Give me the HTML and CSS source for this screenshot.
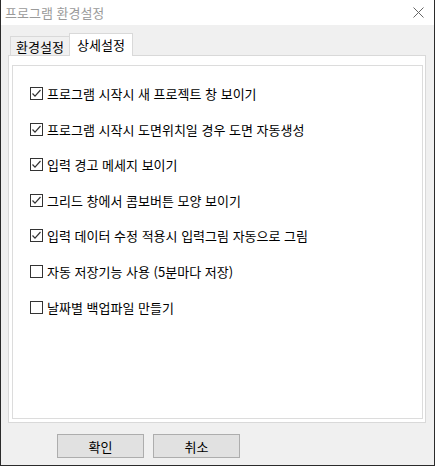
FILE: index.html
```html
<!DOCTYPE html>
<html lang="ko">
<head>
<meta charset="utf-8">
<title>프로그램 환경설정</title>
<link rel="stylesheet" href="styles.css">
</head>
<body>
<div class="window">
  <div class="titlebar">
    <span class="title">프로그램 환경설정</span>
    <svg class="close" width="11" height="11" viewBox="0 0 11 11"><path d="M0.5 0.5 L10.5 10.5 M10.5 0.5 L0.5 10.5" stroke="#666" stroke-width="1" fill="none"/></svg>
  </div>
  <div class="body">
    <div class="tabs">
      <div class="tab">환경설정</div>
      <div class="tab active">상세설정</div>
    </div>
    <div class="panel">
      <div class="group">
        <div class="row"><span class="cb checked"><svg width="11" height="11" viewBox="0 0 11 11"><path d="M1.5 5.5 L4 8.2 L9.5 2" stroke="#333" stroke-width="1.2" fill="none"/></svg></span><span class="label">프로그램 시작시 새 프로젝트 창 보이기</span></div>
        <div class="row"><span class="cb checked"><svg width="11" height="11" viewBox="0 0 11 11"><path d="M1.5 5.5 L4 8.2 L9.5 2" stroke="#333" stroke-width="1.2" fill="none"/></svg></span><span class="label">프로그램 시작시 도면위치일 경우 도면 자동생성</span></div>
        <div class="row"><span class="cb checked"><svg width="11" height="11" viewBox="0 0 11 11"><path d="M1.5 5.5 L4 8.2 L9.5 2" stroke="#333" stroke-width="1.2" fill="none"/></svg></span><span class="label">입력 경고 메세지 보이기</span></div>
        <div class="row"><span class="cb checked"><svg width="11" height="11" viewBox="0 0 11 11"><path d="M1.5 5.5 L4 8.2 L9.5 2" stroke="#333" stroke-width="1.2" fill="none"/></svg></span><span class="label">그리드 창에서 콤보버튼 모양 보이기</span></div>
        <div class="row"><span class="cb checked"><svg width="11" height="11" viewBox="0 0 11 11"><path d="M1.5 5.5 L4 8.2 L9.5 2" stroke="#333" stroke-width="1.2" fill="none"/></svg></span><span class="label">입력 데이터 수정 적용시 입력그림 자동으로 그림</span></div>
        <div class="row"><span class="cb"></span><span class="label">자동 저장기능 사용 (5분마다 저장)</span></div>
        <div class="row"><span class="cb"></span><span class="label">날짜별 백업파일 만들기</span></div>
      </div>
    </div>
    <div class="buttons">
      <div class="btn">확인</div>
      <div class="btn">취소</div>
    </div>
  </div>
</div>
</body>
</html>
```
FILE: styles.css
```css
html, body {
  margin: 0;
  padding: 0;
  background: #f0f0f0;
}
.window {
  width: 435px;
  height: 466px;
  box-sizing: border-box;
  border: 1px solid #2b2b2b;
  border-top: none;
  background: #f0f0f0;
  font-family: "Noto Sans CJK KR", "Noto Sans", sans-serif;
  font-size: 13px;
  color: #000;
  display: flex;
  flex-direction: column;
}
.titlebar {
  height: 25px;
  background: #fff;
  display: flex;
  align-items: center;
  justify-content: space-between;
  padding: 0 10px 0 4px;
}
.title {
  color: #9a9a9a;
  line-height: 15px;
  margin-top: -1px;
}
.close {
  display: block;
  margin-top: -1px;
}
.body {
  display: flex;
  flex-direction: column;
  padding-top: 8px;
}
.tabs {
  display: flex;
  align-items: flex-end;
  padding-left: 9px;
  height: 22px;
}
.tab {
  box-sizing: border-box;
  height: 19px;
  width: 60px;
  border: 1px solid #d9d9d9;
  border-bottom: none;
  background: #f0f0f0;
  display: flex;
  align-items: center;
  justify-content: center;
  line-height: 15px;
  padding-top: 1px;
}
.tab.active {
  height: 23px;
  width: 64px;
  margin-left: -1px;
  margin-bottom: -1px;
  background: #fff;
  position: relative;
  z-index: 1;
  padding-top: 0;
  padding-bottom: 2px;
}
.panel {
  box-sizing: border-box;
  margin-left: 7px;
  width: 418px;
  height: 368px;
  border: 1px solid #d9d9d9;
  background: #fff;
  padding: 9px 2px 3px 3px;
}
.group {
  box-sizing: border-box;
  height: 100%;
  border: 1px solid #dcdcdc;
  padding: 21px 0 0 17px;
  display: flex;
  flex-direction: column;
  gap: 22.6px;
}
.row {
  display: flex;
  align-items: center;
  height: 13px;
}
.cb {
  box-sizing: border-box;
  width: 13px;
  height: 13px;
  border: 1px solid #333;
  background: #fff;
  flex: none;
  display: flex;
  align-items: center;
  justify-content: center;
}
.cb svg {
  display: block;
}
.label {
  margin-left: 4px;
  line-height: 15px;
  white-space: nowrap;
}
.buttons {
  display: flex;
  gap: 9px;
  padding-left: 56px;
  margin-top: 11px;
}
.btn {
  box-sizing: border-box;
  width: 87px;
  height: 24px;
  border: 1px solid #adadad;
  background: #e1e1e1;
  display: flex;
  align-items: center;
  justify-content: center;
  line-height: 15px;
}
```
